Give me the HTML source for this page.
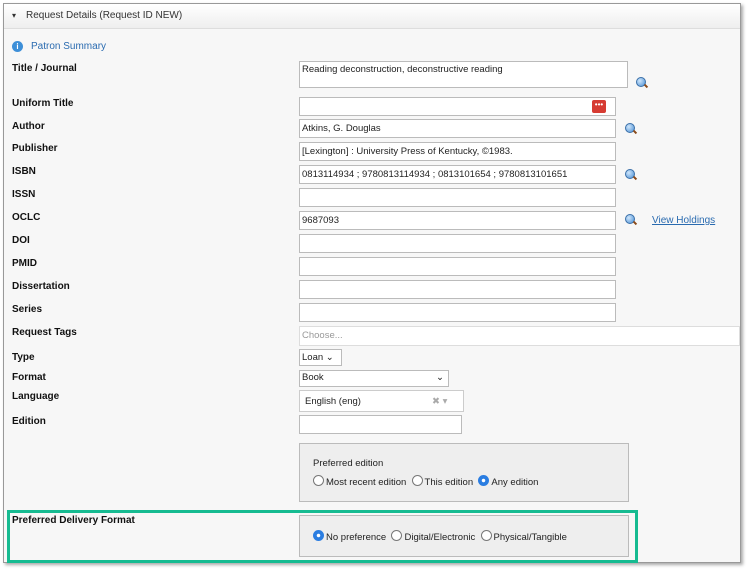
<!DOCTYPE html>
<html><head><style>
body{margin:0;width:747px;height:572px;background:#fff;font-family:"Liberation Sans",Arial,sans-serif;position:relative;overflow:hidden}
.a{position:absolute}
.frame{left:3px;top:3px;width:736px;height:558px;border:1px solid #999;background:#f7f7f7;box-shadow:2px 2px 3px #aaa}
.hdr{left:4px;top:4px;width:736px;height:24px;background:linear-gradient(#fff,#eee);border-bottom:1px solid #ddd;font-size:10px;color:#333}
.lbl{left:12px;font-size:10px;font-weight:bold;color:#111}
.in{left:299px;width:317px;height:19px;border:1px solid #bbb;background:#fff;font-size:9.5px;color:#222;line-height:18px;padding-left:2px;box-sizing:border-box}
.mag{width:8px;height:8px;border-radius:50%;background:radial-gradient(circle at 35% 35%,#cfe6fb,#4b8fd4);border:1px solid #3a6fa8}
.mag:after{content:"";position:absolute;left:7px;top:7px;width:4px;height:2px;background:#8a4a1a;transform:rotate(45deg)}
.r{display:inline-block;width:9px;height:9px;border-radius:50%;border:1px solid #777;background:#fff;vertical-align:-1px;margin-right:2px}
.r.on{border-color:#2a7de1;background:radial-gradient(circle,#fff 0 1.5px,#2a7de1 2px)}
.box{left:299px;width:328px;background:#eee;border:1px solid #bbb;font-size:9.5px;color:#222}
</style></head><body>
<div class="a frame"></div>
<div class="a hdr"><span style="position:absolute;left:8px;top:7px;font-size:8px">▾</span><span style="position:absolute;left:22px;top:6px">Request Details (Request ID NEW)</span></div>
<div class="a" style="left:12px;top:41px;width:11px;height:11px;border-radius:50%;background:#3d8fd8;color:#fff;font-size:8px;text-align:center;line-height:11px;font-weight:bold">i</div>
<div class="a" style="left:31px;top:41px;font-size:10px;color:#2a6bb0">Patron Summary</div>
<div class="a lbl" style="top:63px">Title / Journal</div>
<div class="a lbl" style="top:98px">Uniform Title</div>
<div class="a lbl" style="top:121px">Author</div>
<div class="a lbl" style="top:143px">Publisher</div>
<div class="a lbl" style="top:166px">ISBN</div>
<div class="a lbl" style="top:189px">ISSN</div>
<div class="a lbl" style="top:212px">OCLC</div>
<div class="a lbl" style="top:235px">DOI</div>
<div class="a lbl" style="top:258px">PMID</div>
<div class="a lbl" style="top:281px">Dissertation</div>
<div class="a lbl" style="top:304px">Series</div>
<div class="a lbl" style="top:327px">Request Tags</div>
<div class="a lbl" style="top:352px">Type</div>
<div class="a lbl" style="top:372px">Format</div>
<div class="a lbl" style="top:391px">Language</div>
<div class="a lbl" style="top:416px">Edition</div>
<div class="a lbl" style="top:515px">Preferred Delivery Format</div>

<div class="a in" style="top:61px;width:329px;height:27px;line-height:16px">Reading deconstruction, deconstructive reading</div>
<div class="a mag" style="left:636px;top:77px"></div>
<div class="a in" style="top:97px"></div>
<div class="a" style="left:592px;top:100px;width:14px;height:13px;background:#d63b32;border-radius:2px;color:#fff;font-size:8px;line-height:10px;text-align:center">•••</div>
<div class="a in" style="top:119px">Atkins, G. Douglas</div>
<div class="a mag" style="left:625px;top:123px"></div>
<div class="a in" style="top:142px">[Lexington] : University Press of Kentucky, ©1983.</div>
<div class="a in" style="top:165px">0813114934 ; 9780813114934 ; 0813101654 ; 9780813101651</div>
<div class="a mag" style="left:625px;top:169px"></div>
<div class="a in" style="top:188px"></div>
<div class="a in" style="top:211px">9687093</div>
<div class="a mag" style="left:625px;top:214px"></div>
<div class="a" style="left:652px;top:215px;font-size:10px;color:#2a6bb0;text-decoration:underline">View Holdings</div>
<div class="a in" style="top:234px"></div>
<div class="a in" style="top:257px"></div>
<div class="a in" style="top:280px"></div>
<div class="a in" style="top:303px"></div>
<div class="a in" style="top:326px;width:441px;height:20px;color:#999;border-color:#ddd">Choose...</div>
<div class="a in" style="top:349px;width:43px;height:17px;line-height:15px">Loan ⌄</div>
<div class="a in" style="top:370px;width:150px;height:17px;line-height:14px">Book<span style="position:absolute;right:4px">⌄</span></div>
<div class="a in" style="top:390px;width:165px;height:22px;line-height:21px;border-color:#ccc;padding-left:5px">English (eng)<span style="position:absolute;left:132px;color:#aaa">✖ ▾</span></div>
<div class="a in" style="top:415px;width:163px"></div>
<div class="a box" style="top:443px;height:57px"><div style="position:absolute;left:13px;top:14px">Preferred edition</div><div style="position:absolute;left:13px;top:31px"><span class="r"></span>Most recent edition &nbsp;<span class="r"></span>This edition &nbsp;<span class="r on"></span>Any edition</div></div>
<div class="a" style="left:7px;top:510px;width:625px;height:47px;border:3px solid #16bb91"></div>
<div class="a box" style="top:515px;height:40px"><div style="position:absolute;left:13px;top:14px"><span class="r on"></span>No preference &nbsp;<span class="r"></span>Digital/Electronic &nbsp;<span class="r"></span>Physical/Tangible</div></div>
</body></html>
